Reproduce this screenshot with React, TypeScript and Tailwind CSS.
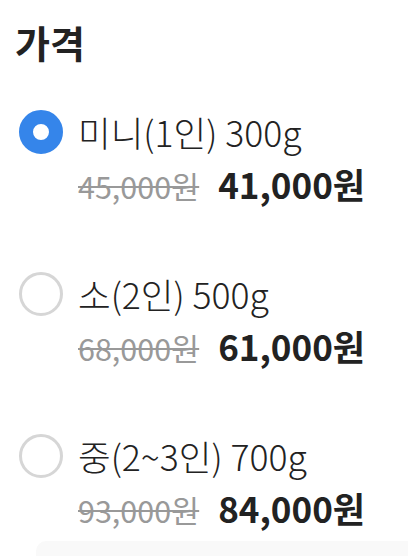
import React from "react";

const font = { fontFamily: '"Noto Sans CJK KR", "Noto Sans", sans-serif' };

const items = [
  { label: "미니(1인) 300g", orig: "45,000원", price: "41,000원", checked: true },
  { label: "소(2인) 500g", orig: "68,000원", price: "61,000원", checked: false },
  { label: "중(2~3인) 700g", orig: "93,000원", price: "84,000원", checked: false },
];

export default function App() {
  return (
    <div className="w-[408px] h-[556px] bg-white overflow-hidden relative" style={font}>
      <div className="pl-[15px] pt-[16px] text-[38px] font-bold leading-[52px] text-[#222]">가격</div>
      <div className="flex flex-col mt-[42px] gap-[66px]">
        {items.map((it) => (
          <div key={it.label} className="flex flex-col pl-[19px]">
            <div className="flex items-center gap-[15px] h-[44px]">
              {it.checked ? (
                <div className="w-[44px] h-[44px] rounded-full border-[14px] border-[#3585ea] bg-white shrink-0" />
              ) : (
                <div className="w-[44px] h-[44px] rounded-full border-[3px] border-[#d6d6d6] bg-white shrink-0" />
              )}
              <span className="text-[35.5px] leading-[44px] font-light text-[#222]">{it.label}</span>
            </div>
            <div className="flex items-baseline gap-[19px] pl-[59px] mt-[10px]">
              <span className="text-[30.5px] leading-[40px] text-[#999] line-through decoration-[2px]">{it.orig}</span>
              <span className="text-[35px] leading-[40px] font-bold text-[#222]">{it.price}</span>
            </div>
          </div>
        ))}
      </div>
      <div className="absolute left-[36px] right-0 top-[541px] bottom-0 bg-[#f9f9f9] rounded-tl-[10px]" />
    </div>
  );
}
